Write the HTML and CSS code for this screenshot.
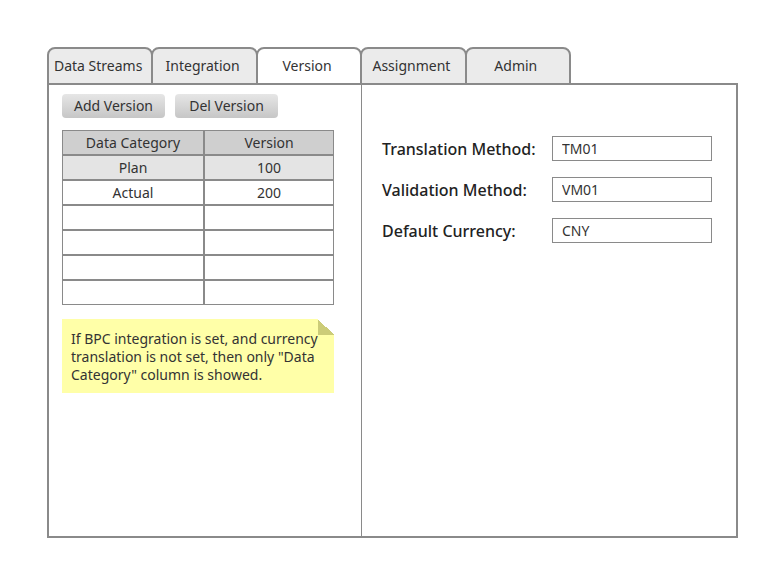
FILE: index.html
```html
<!DOCTYPE html>
<html lang="en">
<head>
<meta charset="utf-8">
<title>Version</title>
<link rel="stylesheet" href="styles.css">
</head>
<body>
<nav class="tabs" role="tablist">
  <button class="tab" type="button" role="tab">Data Streams</button>
  <button class="tab" type="button" role="tab">Integration</button>
  <button class="tab active" type="button" role="tab" aria-selected="true">Version</button>
  <button class="tab" type="button" role="tab">Assignment</button>
  <button class="tab" type="button" role="tab">Admin</button>
</nav>
<main class="panel">
  <section class="versions">
    <div class="actions">
      <button class="action" type="button">Add Version</button>
      <button class="action" type="button">Del Version</button>
    </div>
    <table class="grid">
      <thead>
        <tr><th class="category">Data Category</th><th>Version</th></tr>
      </thead>
      <tbody>
        <tr class="selected"><td>Plan</td><td>100</td></tr>
        <tr><td>Actual</td><td>200</td></tr>
        <tr><td></td><td></td></tr>
        <tr><td></td><td></td></tr>
        <tr><td></td><td></td></tr>
        <tr><td></td><td></td></tr>
      </tbody>
    </table>
    <p class="note">If BPC integration is set, and currency translation is not set, then only "Data Category" column is showed.</p>
  </section>
  <form class="details">
    <label for="translation">Translation Method:</label>
    <input id="translation" type="text" value="TM01">
    <label for="validation">Validation Method:</label>
    <input id="validation" type="text" value="VM01">
    <label for="currency">Default Currency:</label>
    <input id="currency" type="text" value="CNY">
  </form>
</main>
</body>
</html>
```
FILE: styles.css
```css
* {
  box-sizing: border-box;
}

body {
  display: flex;
  flex-direction: column;
  min-height: 100vh;
  margin: 0;
  padding: 47px 31px 31px 47px;
  background: #fff;
  color: #333;
  font: 14px/18px "Noto Sans", "Open Sans", sans-serif;
}

button,
input {
  color: inherit;
  font: inherit;
}

.tabs {
  display: flex;
  max-width: 524px;
}

.tab {
  flex: 1 1 0;
  height: 38px;
  padding: 0 4px 0 0;
  border: 2px solid #8a8a8a;
  border-radius: 8px 8px 0 0;
  background: #ebebeb;
  white-space: nowrap;
}

.tab + .tab {
  margin-left: -2px;
}

.tab.active {
  background: #fff;
}

.panel {
  display: grid;
  flex: 1;
  grid-template-columns: 313px 1fr;
  margin-top: -2px;
  border: 2px solid #8a8a8a;
}

.versions {
  padding: 9px 27px 0 13px;
  border-right: 1px solid #8a8a8a;
}

.actions {
  display: flex;
  gap: 10px;
}

.action {
  width: 103px;
  height: 24px;
  padding: 0;
  border: 0;
  border-radius: 4px;
  background: linear-gradient(#e6e6e6, #c6c6c6);
}

.grid {
  width: 100%;
  margin-top: 12px;
  border-spacing: 0;
  table-layout: fixed;
}

.grid th,
.grid td {
  height: 25px;
  padding: 0;
  border: 1px solid #8a8a8a;
  font-weight: 400;
  text-align: center;
}

.grid th {
  background: #cfcfcf;
}

.grid .category {
  width: 142px;
}

.selected td {
  background: #e4e4e4;
}

.note {
  position: relative;
  margin: 14px 0 0;
  padding: 11px 8px 9px 9px;
  background: #ffffa8;
}

.note::after {
  position: absolute;
  top: 0;
  right: 0;
  width: 16px;
  height: 16px;
  background: linear-gradient(45deg, #cccc78 50%, #fff 50%);
  content: "";
}

.details {
  display: grid;
  grid-template-columns: 170px 1fr;
  align-content: start;
  align-items: center;
  row-gap: 16px;
  padding: 51px 24px 0 20px;
}

.details label {
  color: #222;
  font-size: 16px;
  font-weight: 500;
}

.details input {
  width: 100%;
  height: 25px;
  padding: 0 9px;
  border: 1px solid #8a8a8a;
  background: #fff;
}
```
